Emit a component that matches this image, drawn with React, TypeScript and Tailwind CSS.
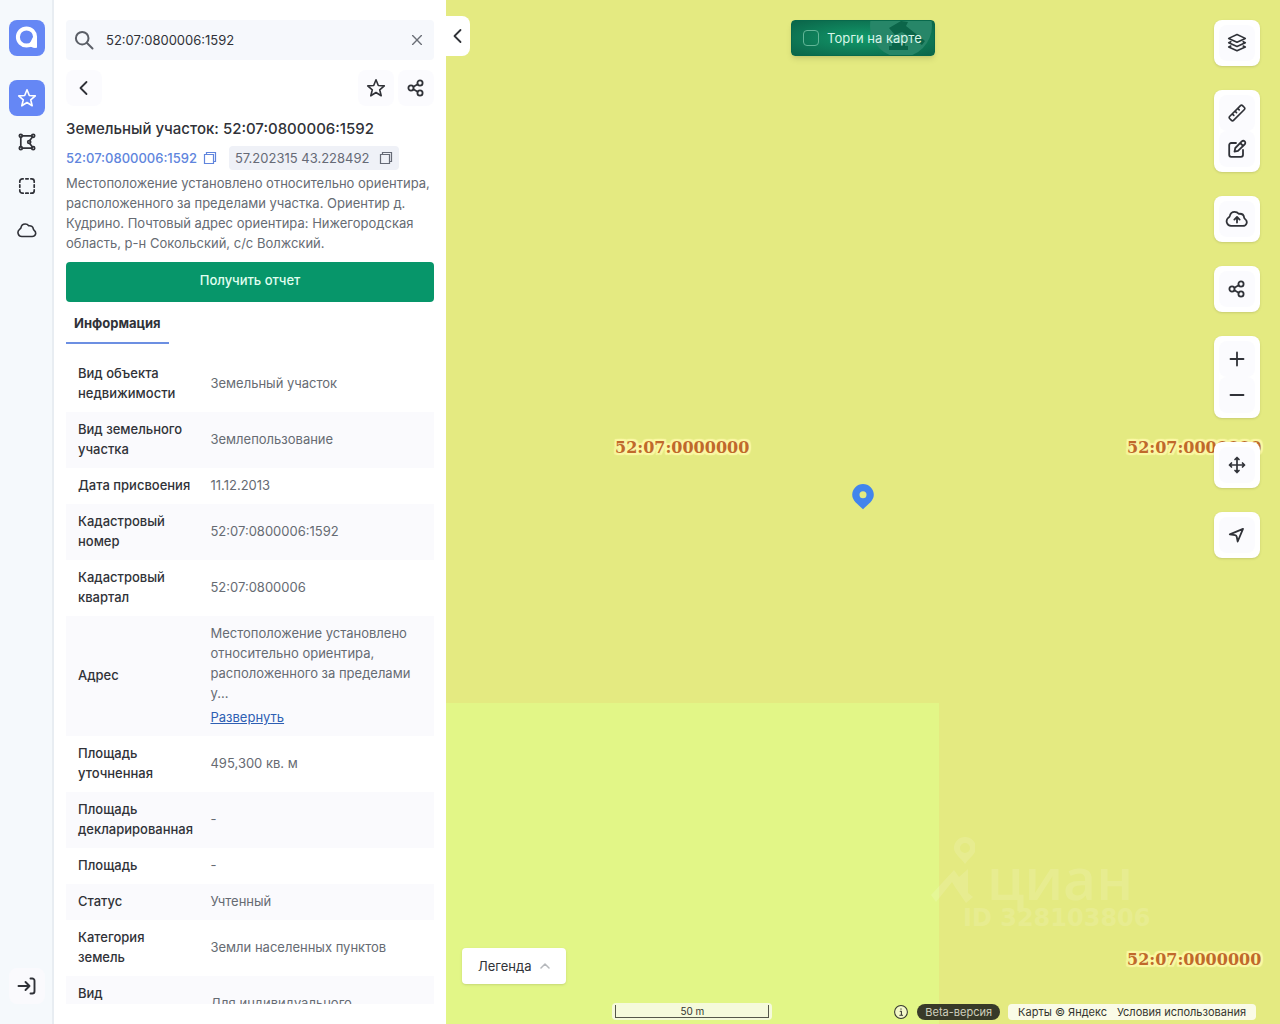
import type { ReactNode } from 'react';

type IconProps = { children: ReactNode; className?: string; width?: number };

function Icon({ children, className = 'size-5', width = 1.6 }: IconProps) {
  return (
    <svg viewBox="0 0 20 20" className={className} fill="none" stroke="currentColor" strokeWidth={width} strokeLinecap="round" strokeLinejoin="round" aria-hidden="true">
      {children}
    </svg>
  );
}

const StarIcon = () => (
  <Icon>
    <path d="M10 1.800l2.300 5.700 6 .4-4.600 3.900 1.500 6L10 14.500l-5.200 3.300 1.500-6L1.700 7.900l6-.4z" />
  </Icon>
);

const ShareIcon = () => (
  <Icon width={1.8}>
    <circle cx="5" cy="10" r="2.600" />
    <circle cx="14" cy="5" r="2.600" />
    <circle cx="14" cy="15" r="2.600" />
    <path d="M7.400 8.800l4.300-2.500M7.400 11.200l4.300 2.500" />
  </Icon>
);

const ChevronLeftIcon = () => (
  <Icon width={1.8}>
    <path d="M12.500 4l-6 6 6 6" />
  </Icon>
);

const CopyIcon = () => (
  <svg viewBox="0 0 14 14" className="size-3.5 shrink-0" fill="none" stroke="currentColor" strokeWidth="1.200" aria-hidden="true">
    <path d="M1.500 3.500h9v9h-9zM3.500 3.500v-2h9v9h-2" />
  </svg>
);

const PolygonIcon = () => (
  <Icon width={1.7}>
    <path d="M5.200 3.800h9.600M5.200 16.200h9.600M3.800 5.200v9.600M15.500 5l-3 3.800M15.500 15l-3-3.800" />
    <circle cx="3.800" cy="3.800" r="1.500" />
    <circle cx="16.200" cy="3.800" r="1.500" />
    <circle cx="3.800" cy="16.200" r="1.500" />
    <circle cx="16.200" cy="16.200" r="1.500" />
    <circle cx="12.200" cy="10" r="1.500" />
  </Icon>
);

const SelectionIcon = () => (
  <Icon width={1.7}>
    <path d="M2.800 6.200V5.300a2.500 2.500 0 0 1 2.500-2.500h.9M13.800 2.800h.9a2.500 2.500 0 0 1 2.500 2.500v.9M17.200 13.800v.9a2.500 2.500 0 0 1-2.500 2.500h-.9M6.200 17.200h-.9a2.500 2.500 0 0 1-2.500-2.500v-.9M8.800 2.800h2.400M8.800 17.200h2.400M2.800 8.800v2.400M17.200 8.800v2.400" />
  </Icon>
);

const CloudIcon = () => (
  <Icon>
    <path d="M4.800 16.500a4 4 0 0 1-2.200-7.200c.7-.5 1.200-.8 1.300-1.500C4.400 5.400 6 4 8.200 4c1.500 0 2.700.6 3.500 1.800 2.500-.4 4.300.9 4.600 3.100.1.700.3 1 .9 1.500 2.700 2.300 1.400 6.100-2 6.100z" />
  </Icon>
);

const LoginIcon = () => (
  <Icon width={1.9}>
    <path d="M1.500 10h11M8.500 6l4 4-4 4M13.500 2.500h1.700a2.300 2.300 0 0 1 2.300 2.300v10.400a2.300 2.300 0 0 1-2.300 2.300h-1.700" />
  </Icon>
);

const mapGroups: { label: string; icon: ReactNode }[][] = [
  [
    {
      label: 'Слои',
      icon: (
        <Icon>
          <path d="M10 1.500l8.300 3.900L10 9.200 1.700 5.400zM3.800 8.700l-2.100 1 8.300 3.800 8.300-3.800-2.100-1M3.800 13l-2.100 1L10 17.800l8.300-3.800-2.100-1" />
        </Icon>
      ),
    },
  ],
  [
    {
      label: 'Линейка',
      icon: (
        <Icon width={1.7}>
          <path d="M2.600 13.500L13.500 2.600a1.400 1.400 0 0 1 2 0l1.900 1.900a1.400 1.400 0 0 1 0 2L6.500 17.400a1.400 1.400 0 0 1-2 0l-1.900-1.900a1.400 1.400 0 0 1 0-2zM5.300 10.800l1.500 1.500M8 8.100l1.500 1.500M10.700 5.400l1.500 1.500" />
        </Icon>
      ),
    },
    {
      label: 'Рисование',
      icon: (
        <Icon width={1.800}>
          <path d="M9 4H4.200a2 2 0 0 0-2 2v9.800a2 2 0 0 0 2 2H14a2 2 0 0 0 2-2V11M8.300 9L14.800 2.400a2 2 0 0 1 2.900 2.900L11 11.800l-3.500.8zM13.200 4l2.900 2.900" />
        </Icon>
      ),
    },
  ],
  [
    {
      label: 'Загрузить',
      icon: (
        <Icon className="size-6" width={1.500}>
          <path d="M5 15.800a3.900 3.900 0 0 1-2.200-6.900c.7-.5 1-.8 1.200-1.500C4.500 5.200 6 4 8 4c1.400 0 2.600.6 3.400 1.700 2.400-.3 4.200.8 4.500 2.900.1.700.3 1 .9 1.500 2.500 2 1.300 5.700-2 5.700zM10 13V8.500M7.800 10.500L10 8.300l2.200 2.200" />
        </Icon>
      ),
    },
  ],
  [{ label: 'Поделиться картой', icon: <ShareIcon /> }],
  [
    {
      label: 'Приблизить',
      icon: (
        <Icon width={1.8}>
          <path d="M3.500 10h13M10 3.500v13" />
        </Icon>
      ),
    },
    {
      label: 'Отдалить',
      icon: (
        <Icon width={1.8}>
          <path d="M3.500 10h13" />
        </Icon>
      ),
    },
  ],
  [
    {
      label: 'Переместить',
      icon: (
        <Icon width={1.7}>
          <path d="M10 2.500v15M2.500 10h15M8 4.500l2-2 2 2M8 15.500l2 2 2-2M4.500 8l-2 2 2 2M15.500 8l2 2-2 2" />
        </Icon>
      ),
    },
  ],
  [
    {
      label: 'Моё местоположение',
      icon: (
        <Icon width={1.800}>
          <path d="M16 3.900L2.800 9.300l5.200.9c.9.200 1.500.7 1.700 1.600l1 4.700z" />
        </Icon>
      ),
    },
  ],
];

const rows: [string, string][] = [
  ['Вид объекта недвижимости', 'Земельный участок'],
  ['Вид земельного участка', 'Землепользование'],
  ['Дата присвоения', '11.12.2013'],
  ['Кадастровый номер', '52:07:0800006:1592'],
  ['Кадастровый квартал', '52:07:0800006'],
  ['Адрес', 'Местоположение установлено относительно ориентира, расположенного за пределами у...'],
  ['Площадь уточненная', '495,300 кв. м'],
  ['Площадь декларированная', '-'],
  ['Площадь', '-'],
  ['Статус', 'Учтенный'],
  ['Категория земель', 'Земли населенных пунктов'],
  ['Вид разрешенного', 'Для индивидуального'],
];

const railButton = 'flex size-9 items-center justify-center rounded-lg';
const softButton = 'flex size-9 items-center justify-center rounded-lg bg-[#fbfbfe]';

function Rail() {
  return (
    <nav aria-label="Разделы" className="flex w-[54px] shrink-0 flex-col items-center bg-[#f5f9fc] py-5 shadow-[inset_-2px_0_#e8edf2]">
      <a href="#home" aria-label="Главная" className="mb-6 flex size-9 items-center justify-center rounded-lg bg-[#6587f5]">
        <svg viewBox="0 0 24 24" className="size-6" fill="none" aria-hidden="true">
          <circle cx="11.500" cy="11" r="8.600" stroke="white" strokeWidth="4" />
          <path d="M18 11h4v10.800c-4 .5-6.300-.7-8-2.800z" fill="white" />
        </svg>
      </a>
      <div className="flex flex-col gap-2">
        <button aria-label="Избранное" className="flex size-9 items-center justify-center rounded-lg bg-[#6587f5] text-white"><StarIcon /></button>
        <button aria-label="Полигоны" className={railButton}><PolygonIcon /></button>
        <button aria-label="Выделение" className={railButton}><SelectionIcon /></button>
        <button aria-label="Облако" className={railButton}><CloudIcon /></button>
      </div>
      <button aria-label="Войти" className="mt-auto flex size-9 items-center justify-center rounded-lg bg-[#fafafd]"><LoginIcon /></button>
    </nav>
  );
}

function Panel() {
  return (
    <aside className="flex w-[392px] shrink-0 flex-col bg-white px-3 py-5">
      <div className="flex h-10 shrink-0 items-center rounded bg-[#f6f8fc] px-2">
        <Icon className="size-5 text-[#5b5f67]" width={2}>
          <circle cx="8.200" cy="8.200" r="6.300" />
          <path d="M13 13l5.500 5.500" />
        </Icon>
        <input aria-label="Поиск" defaultValue="52:07:0800006:1592" className="ml-3 min-w-0 flex-1 bg-transparent text-[13px] outline-none" />
        <button aria-label="Очистить" className="px-px text-[#6b6f77]">
          <Icon className="size-4" width={1.700}>
            <path d="M4.500 4.500l11 11M15.500 4.500l-11 11" />
          </Icon>
        </button>
      </div>
      <div className="mt-2.5 flex shrink-0 gap-1">
        <button aria-label="Назад" className={softButton}><ChevronLeftIcon /></button>
        <button aria-label="В избранное" className="ml-auto flex size-9 items-center justify-center rounded-lg bg-[#fbfbfe]"><StarIcon /></button>
        <button aria-label="Поделиться" className={softButton}><ShareIcon /></button>
      </div>
      <h1 className="mt-3 shrink-0 text-[15px] leading-[22px] font-medium">Земельный участок: 52:07:0800006:1592</h1>
      <div className="mt-1.5 flex h-6 shrink-0 items-center gap-3">
        <button className="flex items-center gap-1.5 font-medium text-[#6085dd]">
          52:07:0800006:1592 <CopyIcon />
        </button>
        <button className="flex h-6 items-center gap-2.5 rounded-sm bg-[#eff1f7] px-1.5 text-[#666a76]">
          57.202315 43.228492 <CopyIcon />
        </button>
      </div>
      <p className="mt-[3px] shrink-0 text-[#666b73]">
        Местоположение установлено относительно ориентира, расположенного за пределами участка. Ориентир д. Кудрино. Почтовый адрес ориентира: Нижегородская область, р-н Сокольский, с/с Волжский.
      </p>
      <button className="mt-[9px] h-10 shrink-0 rounded-sm bg-[#07966a] pb-1 font-medium text-[#e0fff0]">Получить отчет</button>
      <div role="tablist" className="flex shrink-0">
        <button role="tab" aria-selected="true" className="h-[42px] border-b-2 border-[#6c8fe2] px-2 pt-0.5 font-bold">Информация</button>
      </div>
      <div className="mt-3 min-h-0 flex-1 overflow-hidden">
        <table className="w-full table-fixed">
          <tbody>
            {rows.map(([name, value]) => (
              <tr key={name} className="even:bg-[#fafafd]">
                <th scope="row" className="w-[36%] pt-[7px] pr-1.5 pb-[9px] pl-3 text-left font-medium">{name}</th>
                <td className="px-3 pt-[7px] pb-[9px] text-[#666b73]">
                  {value}
                  {name === 'Адрес' && (
                    <div className="mt-1"><a href="#address" className="text-[#2f5fb3] underline">Развернуть</a></div>
                  )}
                </td>
              </tr>
            ))}
          </tbody>
        </table>
      </div>
    </aside>
  );
}

const parcelLabel =
  "absolute font-['DejaVu_Serif'] text-[16px] leading-5 font-bold text-[#c0692b] [text-shadow:0_0_2px_#fbf8a5,2px_0_1px_#fbf8a5,-2px_0_1px_#fbf8a5,0_2px_1px_#fbf8a5,0_-2px_1px_#fbf8a5,2px_2px_1px_#fbf8a5,-2px_-2px_1px_#fbf8a5,2px_-2px_1px_#fbf8a5,-2px_2px_1px_#fbf8a5]";

function MapView() {
  return (
    <main className="relative min-w-0 flex-1 overflow-hidden bg-[#e4ea81]">
      <div className="absolute top-[703px] bottom-0 left-0 w-[493px] bg-[#e2f687]" />
      <span className={`${parcelLabel} top-[438px] left-[169px]`}>52:07:0000000</span>
      <span className={`${parcelLabel} top-[438px] left-[681px]`}>52:07:0000000</span>
      <span className={`${parcelLabel} top-[950px] left-[681px]`}>52:07:0000000</span>

      <svg viewBox="0 0 22 26" className="absolute top-[484px] left-[406px] h-[26px] w-[22px]" role="img" aria-label="Метка участка">
        <path fillRule="evenodd" fill="#4285ec" d="M11 0a10.800 10.800 0 0 1 10.800 10.800c0 6-5.800 9.500-10.800 14.500C6 20.300.2 16.800.2 10.800A10.800 10.800 0 0 1 11 0zm0 7.200a3.500 3.500 0 1 0 0 7 3.500 3.500 0 0 0 0-7z" />
      </svg>

      <div className="absolute top-[836px] left-[485px] text-white opacity-[0.12]">
        <div className="flex items-end gap-3">
          <svg viewBox="0 0 44 70" className="h-[70px] w-11" fill="none" stroke="currentColor" aria-hidden="true">
            <path fill="currentColor" stroke="none" fillRule="evenodd" d="M34 1a11 11 0 0 1 11 11c0 6-7 10-11 16-4-6-11-10-11-16A11 11 0 0 1 34 1zm0 6a5 5 0 1 0 0 10 5 5 0 0 0 0-10z" />
            <path fill="currentColor" stroke="none" d="M0 59l23-25 5 7 9-8v24l5 4-7 6-11-16-3-5L5 66z" />
          </svg>
          <span className="font-['Open_Sans'] text-[57px] leading-[55px] font-semibold">циан</span>
        </div>
        <div className="pl-8 font-['DejaVu_Sans'] text-[24px] leading-6 font-bold">ID 328103806</div>
      </div>

      <button aria-label="Свернуть панель" className="absolute top-4 left-0 flex h-10 w-6 items-center justify-center rounded-r-lg bg-white"><ChevronLeftIcon /></button>

      <label className="absolute top-5 left-1/2 flex h-9 w-36 -translate-x-1/2 items-center gap-2 overflow-hidden rounded-sm border border-[#08694c] bg-radial from-[#129a6b] to-[#0b6549] px-[11px] text-[#d8f5e8] shadow-md">
        <svg viewBox="0 0 64 36" className="absolute top-0 right-0 h-9 w-16" aria-hidden="true">
          <circle cx="31" cy="5" r="31" fill="#278668" />
          <path d="M19 29h19v-4h-3v-3H22v3h-3zM19 7L31 0l7 1-2 4 19 15-3 4-20-13-7 3z" fill="#0b6549" />
        </svg>
        <input type="checkbox" className="relative size-4 appearance-none rounded border border-[#62b697]" />
        <span className="relative">Торги на карте</span>
      </label>

      <div className="absolute top-5 right-5 flex flex-col gap-6">
        {mapGroups.map((group) => (
          <div key={group[0].label} className="rounded-lg bg-white p-[5px] shadow-sm">
            {group.map((item) => (
              <button key={item.label} aria-label={item.label} className={softButton}>{item.icon}</button>
            ))}
          </div>
        ))}
      </div>

      <button className="absolute bottom-10 left-4 flex h-9 items-center gap-2 rounded-sm bg-white px-4 shadow-sm">
        Легенда
        <Icon className="size-2.5 text-[#b5b8bc]" width={3}>
          <path d="M2 14l8-8 8 8" />
        </Icon>
      </button>

      <footer className="absolute right-6 bottom-1 flex items-center text-[11px] leading-4 text-[#34352f]">
        <div className="mr-[121px] w-40 rounded-sm bg-[#f5fadb] px-[3px] py-0.5 text-[10px] leading-3">
          <div className="border border-t-0 border-[#55574a] text-center">50 m</div>
        </div>
        <button aria-label="Информация о карте" className="mr-2">
          <Icon className="size-4" width={1.300}>
            <circle cx="10" cy="10" r="8" fill="#f3f8c8" />
            <path d="M9 9h1.500v5M8.500 14h3.500M10 6v.5" />
          </Icon>
        </button>
        <span className="mr-2 rounded-full bg-[#383a29] px-2 text-[#cfcfbd]">Beta-версия</span>
        <div className="flex gap-2.5 rounded-sm bg-[#fafbe6] px-2.5">
          <a href="#maps">Карты © Яндекс</a>
          <a href="#terms">Условия использования</a>
        </div>
      </footer>
    </main>
  );
}

export default function App() {
  return (
    <div className="flex h-screen overflow-hidden font-[Inter,sans-serif] text-[13px] leading-5 text-[#303238]">
      <Rail />
      <Panel />
      <MapView />
    </div>
  );
}
